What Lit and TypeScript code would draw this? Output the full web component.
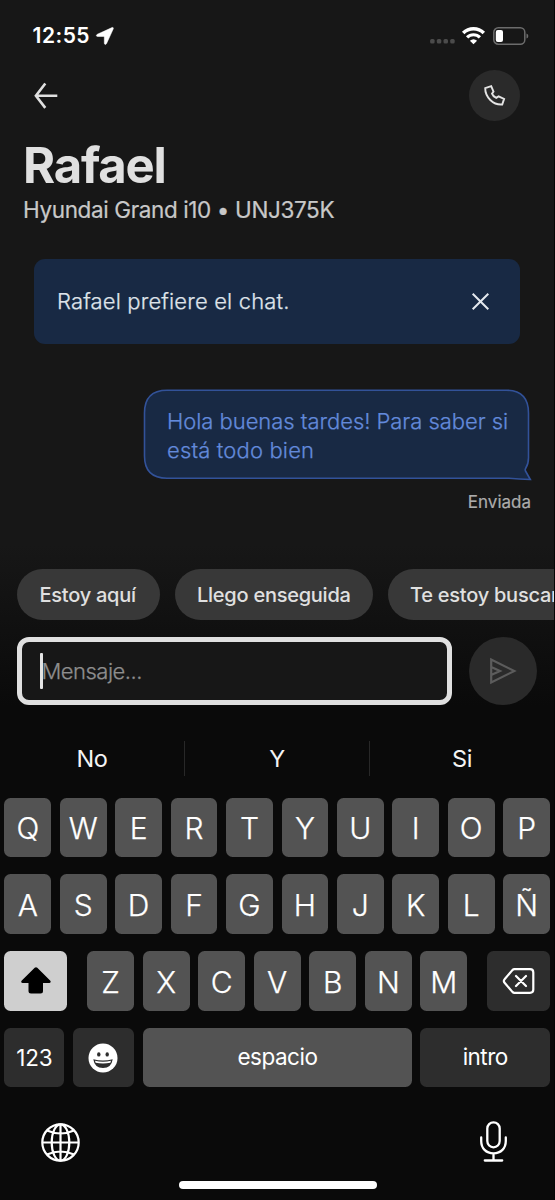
import { LitElement, html, css, svg } from "lit";
import { customElement } from "lit/decorators.js";

@customElement("app-root")
export class AppRoot extends LitElement {
  static styles = css`
    :host {
      display: block;
      width: 555px;
      height: 1200px;
      overflow: hidden;
      font-family: Inter, "Liberation Sans", sans-serif;
      background: linear-gradient(#171717 0, #171717 545px, #0a0a0a 705px, #0a0a0a 100%);
      color: #e0e0e0;
    }
    * { box-sizing: border-box; }
    svg { display: block; flex: none; overflow: visible; }
    .screen { display: flex; flex-direction: column; height: 1200px; border-right: 1px solid #050505; white-space: nowrap; }
    .status { display: flex; align-items: center; height: 70px; padding: 1px 25px 0 32.5px; color: #fff; }
    .time { font-size: 21px; font-weight: 600; line-height: 30px; letter-spacing: 0.5px; margin-right: 6px; }
    .dots { margin-left: auto; margin-top: 11px; }
    .wifi { margin-left: 7.5px; }
    .battery { margin-left: 8px; }
    .nav { display: flex; align-items: center; justify-content: space-between; height: 51px; padding: 0 34px 0 34px; }
    .call { width: 51px; height: 51px; border-radius: 50%; background: #2a2a2a; display: grid; place-items: center; }
    .head { padding: 17px 0 0 23px; height: 138px; }
    .name { margin: 0; font-size: 49px; line-height: 56px; font-weight: 700; letter-spacing: -1.2px; }
    .car { margin-top: 2px; font-size: 22.5px; line-height: 28px; font-weight: 400; letter-spacing: -0.38px; color: #c8c8c8; -webkit-text-stroke: 0.2px #c8c8c8; }
    .banner { display: flex; align-items: center; justify-content: space-between; margin: 0 34px; height: 85px; padding: 0 31px 0 23px; border-radius: 11px; background: #182944; font-size: 22px; font-weight: 300; color: #dfe3ea; -webkit-text-stroke: 0.25px #dfe3ea; }
    .pref { padding-bottom: 2px; letter-spacing: 0.15px; }
    .msg { display: grid; margin: 45px 23px 0 143px; width: 388px; height: 91px; }
    .msg > * { grid-area: 1 / 1; }
    .text { padding: 18px 0 0 24px; font-size: 22px; line-height: 28.5px; font-weight: 300; color: #638adb; -webkit-text-stroke: 0.25px #638adb; }
    .l1 { letter-spacing: -0.04px; }
    .l2 { letter-spacing: 0.15px; }
    .sent { margin: 10px 23px 0 0; text-align: right; font-size: 17px; line-height: 24px; font-weight: 400; color: #acacac; -webkit-text-stroke: 0.2px #acacac; }
    .chips { display: flex; gap: 14.5px; margin: 55px 0 0 17px; overflow: hidden; }
    .chip { flex: none; height: 51px; border-radius: 26px; background: #383838; font-size: 20px; font-weight: 500; line-height: 52px; letter-spacing: -0.25px; padding-left: 22.5px; }
    .compose { display: flex; justify-content: space-between; margin: 17px 17px 0 17px; }
    .input { display: flex; align-items: center; width: 435px; height: 68px; border: 5px solid #e0e0e0; border-radius: 12px; background: #171717; padding-left: 18px; font-size: 22px; font-weight: 300; letter-spacing: -0.5px; color: #8e8e8e; -webkit-text-stroke: 0.25px #8e8e8e; }
    .caret { width: 3px; height: 36px; border-radius: 1px; background: #e4e4e4; margin-right: -1.5px; }
    .send { width: 68px; height: 68px; border-radius: 50%; background: #2a2a2a; display: grid; place-items: center; }
    .suggest { display: grid; grid-template-columns: 184px 185px 185px; align-items: center; margin-top: 36px; height: 35px; color: #f4f4f4; font-size: 23.5px; letter-spacing: -0.4px; text-align: center; line-height: 35px; }
    .suggest span + span { border-left: 1px solid #282828; }
    .keys { display: flex; flex-direction: column; gap: 17.2px; margin-top: 21.5px; padding: 0 4px 0 4.4px; color: #fff; }
    .row { display: flex; justify-content: space-between; height: 59.6px; }
    .key { display: flex; align-items: center; justify-content: center; width: 46.8px; height: 59.6px; border-radius: 6.5px; background: #535353; font-size: 30px; font-weight: 300; -webkit-text-stroke: 0.25px #fff; padding-top: 2px; }
    .dark { background: #2d2d2d; }
    .shift { width: 62.6px; background: #cfcfcf; padding-top: 0; }
    .del { width: 62.6px; padding-top: 0; }
    .mid { display: flex; gap: 8.75px; }
    .digits { width: 60px; }
    .emoji { width: 61.5px; padding: 0 1px 0 0; }
    .space { width: 269px; }
    .enter { width: 129.5px; }
    .word { font-size: 22.5px; font-weight: 400; letter-spacing: -0.5px; padding: 0 0 3px; -webkit-text-stroke: 0; }
    .num { padding: 0; letter-spacing: -0.2px; }
    .tools { display: flex; justify-content: space-between; align-items: center; height: 42px; margin-top: 33px; padding: 0 47px 0 41px; }
    .globe { margin-top: 2px; }
    .home { width: 198px; height: 8px; border-radius: 4px; background: #fff; margin: 18.5px 0 0 179px; }
  `;

  private letters(s: string) {
    return [...s].map((c) => html`<div class="key">${c}</div>`);
  }

  render() {
    return html`<div class="screen">
      <div class="status">
        <span class="time">12:55</span>
        <svg width="18" height="18" viewBox="0 0 18 18"><path d="M16 .6 1.3 7.3c-1.4.7-1.2 2.2.4 2.2h6.1c.4 0 .5.2.5.5v6.1c0 1.6 1.6 1.9 2.300.4L17.200 2C17.700.8 17 .1 16 .6Z" fill="#fff" stroke="#fff" stroke-width=".5"/></svg>
        <svg class="dots" width="25" height="5" viewBox="0 0 25 5">${[0, 1, 2, 3].map((i) => svg`<rect x=${0.1 + i * 6.7} y="0" width="4.500" height="4.500" rx="1.500" fill="#4b4b4b"/>`)}</svg>
        <svg class="wifi" width="23" height="18" viewBox="0 0 23 18" fill="none" stroke="#fff">
          <path d="M1.200 5.900a14.600 14.600 0 0 1 20.600 0" stroke-width="3.500"/>
          <path d="M5.100 10.400a9 9 0 0 1 12.800 0" stroke-width="3.200"/>
          <path d="M11.500 17.300 7.900 13.800q3.600-3 7.200 0Z" fill="#fff" stroke="none"/>
        </svg>
        <svg class="battery" width="36" height="18" viewBox="0 0 36 18"><rect x=".8" y=".8" width="31" height="16.400" rx="4.500" fill="none" stroke="#6c6c6c" stroke-width="1.500"/><rect x="2.800" y="3" width="7.200" height="12" rx="2" fill="#fff"/><path d="M33.500 6.500q1.800.5 1.800 2.500t-1.800 2.500Z" fill="#6c6c6c"/></svg>
      </div>
      <div class="nav">
        <svg width="24" height="26" viewBox="0 0 24 26" fill="none" stroke="#e0e0e0" stroke-width="2.600"><path d="M1.500 12.700H23.300M11.300.5 1.900 12.700l9.400 12.200"/></svg>
        <div class="call"><svg width="21" height="21" viewBox="0 0 21 21" fill="none" stroke="#e4e4e4" stroke-width="1.900"><path d="M1.200 3.100 7.200 1.200 9.500 6.600 8 8.700c.7 1.900 2.300 3.500 4.200 4.200l2.400-1.500 5.500 2.500-1.900 5.600C9.200 20.200 1.100 12.200 1.200 3.100Z"/></svg></div>
      </div>
      <div class="head">
        <h1 class="name">Rafael</h1>
        <div class="car">Hyundai Grand i10 • UNJ375K</div>
      </div>
      <div class="banner"><span class="pref">Rafael prefiere el chat.</span>
        <svg width="17" height="17" viewBox="0 0 17 17" stroke="#e4e8ee" stroke-width="2"><path d="M.7.7l15.600 15.600M16.300.7.7 16.300"/></svg>
      </div>
      <div class="msg">
        <svg width="388" height="91" viewBox="0 0 388 91"><path d="M24 1.200H363Q385.500 1.200 385.500 24V69Q385.500 75 382.600 79.500Q381.800 80.800 382.500 82L387.300 90.500Q376 90 366 89.200H24Q1.500 89.200 1.500 67V24Q1.500 1.200 24 1.200Z" fill="#182944" stroke="#325299" stroke-width="1.600"/></svg>
        <div class="text"><span class="l1">Hola buenas tardes! Para saber si</span><br><span class="l2">está todo bien</span></div>
      </div>
      <div class="sent">Enviada</div>
      <div class="chips">
        <div class="chip" style="width:143px">Estoy aquí</div>
        <div class="chip" style="width:198.500px">Llego enseguida</div>
        <div class="chip" style="width:220px">Te estoy buscando</div>
      </div>
      <div class="compose">
        <div class="input"><span class="caret"></span><span class="ph">Mensaje...</span></div>
        <div class="send"><svg width="26" height="26" viewBox="0 0 26 26" fill="none" stroke="#5c5c5c" stroke-width="2.200"><path d="M1.200 1.500V24.500L24.300 13ZM1.200 9 10 13 1.200 17"/></svg></div>
      </div>
      <div class="suggest"><span>No</span><span>Y</span><span>Si</span></div>
      <div class="keys">
        <div class="row">${this.letters("QWERTYUIOP")}</div>
        <div class="row">${this.letters("ASDFGHJKLÑ")}</div>
        <div class="row">
          <div class="key shift"><svg width="30" height="27" viewBox="0 0 30 27"><path d="M13.700.8 .8 13.600C-.3 14.700.2 16 1.600 16H7.500v8q0 2.500 2.500 2.500h9.500q2.500 0 2.500-2.500V16h6.300c1.400 0 1.900-1.300.8-2.400L16.300.8q-1.300-1.200-2.600 0Z" fill="#000"/></svg></div>
          <div class="mid">${this.letters("ZXCVBNM")}</div>
          <div class="key dark del"><svg width="32" height="26" viewBox="0 0 32 26" fill="none" stroke="#fff" stroke-width="2.200" stroke-linecap="round" stroke-linejoin="round"><path d="M11.500 1.200H27q3.300 0 3.300 3.300v17q0 3.300-3.300 3.300H11.500q-1.200 0-2.100-.9L1.800 15q-1.900-2 0-4L9.400 2.100q.9-.9 2.100-.9ZM13 8l10 10M23 8l-10 10"/></svg></div>
        </div>
        <div class="row">
          <div class="key dark word num digits">123</div>
          <div class="key dark emoji"><svg width="30" height="30" viewBox="0 0 30 30"><circle cx="15" cy="15" r="14.500" fill="#fff"/><ellipse cx="10.800" cy="11.400" rx="1.700" ry="2.200" fill="#2d2d2d"/><ellipse cx="19.200" cy="11.400" rx="1.700" ry="2.200" fill="#2d2d2d"/><path d="M5.300 16.300q9.700 2.400 19.400 0-1.200 8.700-9.700 8.700t-9.700-8.700Z" fill="#2d2d2d"/><path d="M7 17.800q8 1.700 16 0l-.6 2q-7.400 1.300-14.800 0Z" fill="#fff"/></svg></div>
          <div class="key word space">espacio</div>
          <div class="key dark word enter">intro</div>
        </div>
      </div>
      <div class="tools">
        <svg class="globe" width="39" height="39" viewBox="0 0 39 39" fill="none" stroke="#fff" stroke-width="2.200"><circle cx="19.500" cy="19.500" r="18.200"/><ellipse cx="19.500" cy="19.500" rx="8.800" ry="18.200"/><path d="M19.500 1.300v36.400M1.300 19.500h36.400M6 7.500q13.500 6 27 0M6 31.500q13.500-6 27 0"/></svg>
        <svg width="27" height="41" viewBox="0 0 27 41" fill="none" stroke="#fff" stroke-width="2.300" stroke-linecap="round"><rect x="7.300" y="1.300" width="12.400" height="25" rx="6.200"/><path d="M1.200 16.500v3.500c0 7.200 4.800 12.300 12.300 12.300S25.800 27.200 25.800 20V16.500M13.500 32.300v7.200M4.800 39.500h17.400"/></svg>
      </div>
      <div class="home"></div>
    </div>`;
  }
}
